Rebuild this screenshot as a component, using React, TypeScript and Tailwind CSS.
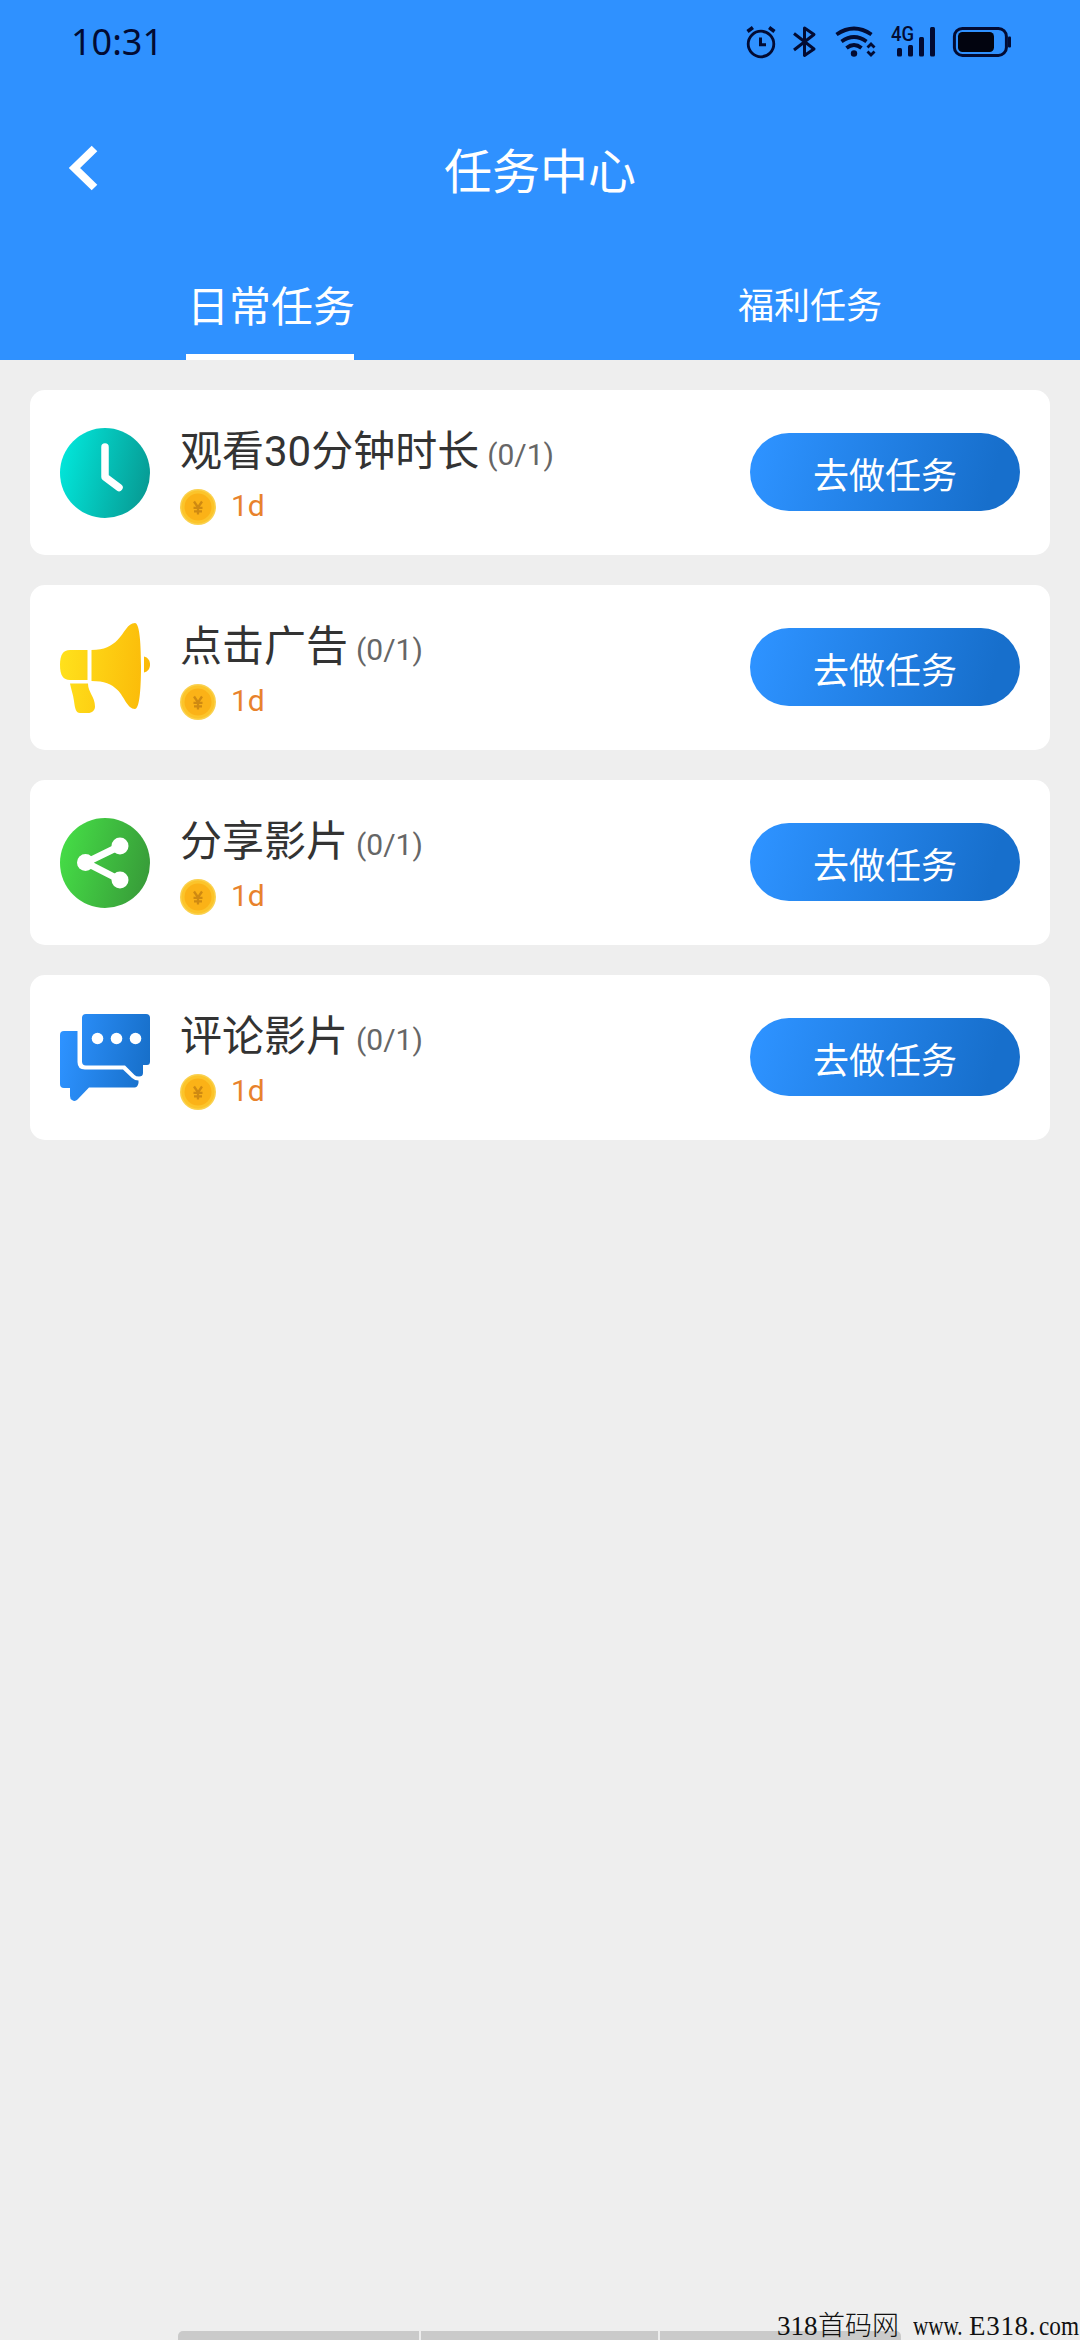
import React from "react";

function StatusIcons() {
  return (
    <div className="flex h-[34px] items-center text-[#020b33]">
      <svg width="34" height="34" viewBox="744 25 34 34" fill="none" stroke="currentColor" strokeWidth="2.8">
        <circle cx="761" cy="44" r="12.8" />
        <path d="M760.5 37.500v7.200h5.500" strokeWidth="3" />
        <path d="M747.500 31.500l5.400-4M774.500 31.500l-5.400-4" strokeWidth="3.600" />
      </svg>
      <svg className="ml-[12px]" width="30" height="34" viewBox="790 25 30 34" fill="none" stroke="currentColor" strokeWidth="3">
        <path d="M794 33.500l20 15.500-9.500 6.500V28l9.500 6.500-20 15.500" strokeLinejoin="round" />
      </svg>
      <svg className="ml-[14px]" width="44" height="34" viewBox="834 25 44 34" fill="none" stroke="currentColor" strokeWidth="3.800">
        <path d="M836.500 34.500q17.500-12 35 0" />
        <path d="M841.500 41.500q12.500-9 25 0" />
        <path d="M846.500 48q7.500-6 15 0" />
        <circle cx="854" cy="53.500" r="3.200" fill="currentColor" stroke="none" />
        <path d="M867.500 47.500l3.500-3.500 3.500 3.500M867.500 51.500l3.500 3.500 3.500-3.500" strokeWidth="2.800" />
      </svg>
      <div className="relative ml-[12px] h-[34px] w-[48px]">
        <span className="absolute -top-[1px] left-[1px] origin-left scale-x-90 text-[20.5px] leading-[21px] font-medium">4G</span>
        <svg width="48" height="34" viewBox="890 25 48 34" fill="currentColor">
          <rect x="897" y="48" width="5" height="8.500" rx="1.500" />
          <rect x="908" y="45" width="5" height="11.500" rx="1.500" />
          <rect x="919" y="37" width="5" height="19.500" rx="1.500" />
          <rect x="930" y="27" width="5" height="29.500" rx="1.500" />
        </svg>
      </div>
      <svg className="ml-[13px]" width="62" height="34" viewBox="951 25 62 34">
        <rect x="954.400" y="28.400" width="52" height="27" rx="8" fill="none" stroke="currentColor" strokeWidth="3" />
        <rect x="958" y="32" width="36" height="20" rx="4.500" fill="#02040f" />
        <rect x="1008" y="36.500" width="3" height="11" rx="1" fill="currentColor" />
      </svg>
    </div>
  );
}

function ClockIcon() {
  return (
    <svg width="90" height="90" viewBox="0 0 90 90">
      <defs>
        <linearGradient id="teal" x1="0" y1=".35" x2="1" y2=".6">
          <stop offset="0" stopColor="#02e6da" />
          <stop offset="1" stopColor="#079b94" />
        </linearGradient>
      </defs>
      <circle cx="45" cy="45" r="45" fill="url(#teal)" />
      <path d="M45 19v30l14 10.500" fill="none" stroke="#fff" strokeWidth="7.500" strokeLinecap="round" strokeLinejoin="round" />
    </svg>
  );
}

function MegaphoneIcon() {
  return (
    <svg width="90" height="90" viewBox="0 0 90 90">
      <defs>
        <linearGradient id="gold" gradientUnits="userSpaceOnUse" x1="0" y1="40" x2="90" y2="50">
          <stop offset="0" stopColor="#ffe11c" />
          <stop offset="1" stopColor="#fbb908" />
        </linearGradient>
      </defs>
      <g fill="url(#gold)">
        <path d="M27.500 27v30H10C3 57 0 52 0 42s3-15 10-15z" />
        <path d="M31.500 27c13 0 20-4 26-10 7-7 10-17 17.500-17 4 0 6 16 6 43s-2 43-6 43c-7.500 0-10.500-12-17.500-19-6-6-13-9-26-9z" />
        <path d="M84 33.500c4 1 6 4 6 8s-2 7-6 8z" />
        <path d="M10 60.500h18c0 9 7 13 7 23 0 4-3 6.500-7 6.500H20c-4 0-5-4-6-12-1-7-3-12-4-17.500z" />
      </g>
    </svg>
  );
}

function ShareIcon() {
  return (
    <svg width="90" height="90" viewBox="0 0 90 90">
      <defs>
        <linearGradient id="green" x1="0" y1=".35" x2="1" y2=".6">
          <stop offset="0" stopColor="#45dc46" />
          <stop offset="1" stopColor="#389c39" />
        </linearGradient>
      </defs>
      <circle cx="45" cy="45" r="45" fill="url(#green)" />
      <path d="M60 28L26 44.500L60 62" fill="none" stroke="#fff" strokeWidth="7" />
      <g fill="#fff">
        <circle cx="60" cy="28" r="8.500" />
        <circle cx="25.500" cy="44.500" r="8.500" />
        <circle cx="60" cy="62" r="8.500" />
      </g>
    </svg>
  );
}

function CommentIcon() {
  return (
    <svg width="90" height="90" viewBox="0 0 90 90">
      <defs>
        <linearGradient id="blue" gradientUnits="userSpaceOnUse" x1="0" y1="35" x2="90" y2="50">
          <stop offset="0" stopColor="#2d92ff" />
          <stop offset="1" stopColor="#176fc9" />
        </linearGradient>
      </defs>
      <g fill="url(#blue)">
        <path d="M4 18h13.500v31q0 7.500 7.500 7.500h38l9 8.500q3 2.500 6.500 2.500v2.500q-1 4.500-4 4.500H29L17.500 86.500Q15 89 12 87q-2-1-2-4v-8H4q-4 0-4-4V22q0-4 4-4z" />
        <path d="M26 1h60q4 0 4 4v43.500q0 3.500-3 3.500h-4V60q0 3.500-4 3.500-3 0-4.500-1.500L65 52.500H26q-4 0-4-4V5q0-4 4-4z" />
      </g>
      <g fill="#fff">
        <circle cx="37.500" cy="25.500" r="5.800" />
        <circle cx="56.500" cy="25.500" r="5.800" />
        <circle cx="75.500" cy="25.500" r="5.800" />
      </g>
    </svg>
  );
}

function Coin() {
  return (
    <svg width="36" height="36" viewBox="0 0 36 36">
      <circle cx="18" cy="18" r="18" fill="#fad14e" />
      <circle cx="18" cy="18" r="16.500" fill="#fcc42a" />
      <circle cx="18" cy="18" r="13.500" fill="#fbb217" />
      <path d="M14 12.500l4 6 4-6M13.500 18.800h9M14 22.300h8M18 18.500v7" fill="none" stroke="#cf8a12" strokeWidth="2.300" />
    </svg>
  );
}

const tasks = [
  { title: "观看30分钟时长", icon: <ClockIcon /> },
  { title: "点击广告", icon: <MegaphoneIcon /> },
  { title: "分享影片", icon: <ShareIcon /> },
  { title: "评论影片", icon: <CommentIcon /> },
];

function TaskCard({ title, icon }: { title: string; icon: React.ReactNode }) {
  return (
    <div className="flex h-[165px] items-start rounded-[15px] bg-white px-[30px]">
      <div className="mt-[38px] h-[90px] w-[90px]">{icon}</div>
      <div className="ml-[30px] flex-1 pt-[32px]">
        <div className="flex h-[60px] items-center whitespace-nowrap">
          <span className="text-[42px] leading-[60px] text-[#333]">{title}</span>
          <span className="mt-[6px] ml-[8px] text-[30px] leading-[54px] text-[#666]">(0/1)</span>
        </div>
        <div className="mt-[7px] flex h-[36px] items-center">
          <Coin />
          <span className="-mt-[2px] ml-[15px] text-[30px] leading-[36px] text-[#e8822c]">1d</span>
        </div>
      </div>
      <button className="mt-[43px] h-[78px] w-[270px] rounded-full bg-[linear-gradient(105deg,#2d92ff_5%,#176fcc_88%)] pt-[7px] text-[36px] leading-[71px] text-white">
        <span className="relative top-[2px]">去做任务</span>
      </button>
    </div>
  );
}

export default function App() {
  return (
    <div className="flex h-[2340px] w-[1080px] flex-col overflow-hidden bg-[#eeeeee] font-['Roboto','Noto_Sans_CJK_SC',sans-serif]">
      <header className="h-[360px] bg-[#2f91ff] text-white">
        <div className="flex h-[84px] items-center justify-between pr-[67px] pl-[71px]">
          <span className="font-['Noto_Sans',sans-serif] text-[36px] leading-[84px] text-[#020b33]">10:31</span>
          <StatusIcons />
        </div>
        <div className="grid h-[172px] grid-cols-3 items-center">
          <svg className="-mt-[4px] ml-[66px]" width="34" height="48" viewBox="66 144 34 48" fill="none" stroke="#fff" strokeWidth="8">
            <path d="M94.500 148.500L74.500 168l20 19.500" />
          </svg>
          <h1 className="pt-[5px] text-center text-[48px] leading-[70px]">任务中心</h1>
        </div>
        <nav className="grid h-[104px] grid-cols-2">
          <div className="flex flex-col items-center justify-between">
            <span className="pt-[22px] pl-[2px] text-[42px] leading-[60px]">日常任务</span>
            <span className="h-[6px] w-[168px] bg-white" />
          </div>
          <span className="pt-[25px] text-center text-[36px] leading-[52px]">福利任务</span>
        </nav>
      </header>
      <main className="flex flex-1 flex-col gap-[30px] p-[30px]">
        {tasks.map((t) => (
          <TaskCard key={t.title} title={t.title} icon={t.icon} />
        ))}
      </main>
      <footer className="relative h-[40px]">
        <div className="mt-[31px] ml-[178px] flex h-[9px] w-[723px] gap-[2px] overflow-hidden rounded-t-[5px]">
          <span className="w-[241px] bg-[#cacaca]" />
          <span className="w-[237px] bg-[#cacaca]" />
          <span className="flex-1 bg-[#cacaca]" />
        </div>
        <div className="absolute top-0 left-[777px] flex h-[40px] items-end font-['Liberation_Serif','Noto_Sans_CJK_SC',serif] text-[27px] leading-[28px] whitespace-nowrap text-[#111]">
          <span className="w-[41px]">318</span>
          <span className="w-[95px] font-light">首码网</span>
          <span className="w-[56px]">
            <span className="inline-block origin-left scale-x-[.78]">www.</span>
          </span>
          <span className="w-[70px] tracking-[.7px]">E318.</span>
          <span className="w-[41px]">
            <span className="inline-block origin-left scale-x-[.86]">com</span>
          </span>
        </div>
      </footer>
    </div>
  );
}
